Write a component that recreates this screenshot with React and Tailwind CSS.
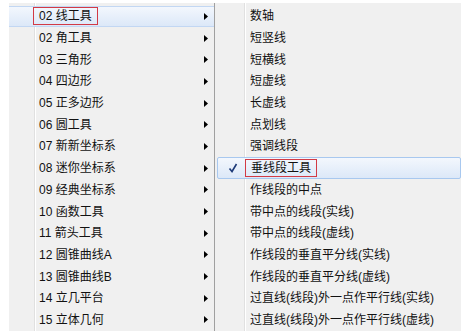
import { Fragment } from 'react'

const leftItems = [
  '02 线工具', '02 角工具', '03 三角形', '04 四边形', '05 正多边形',
  '06 圆工具', '07 新新坐标系', '08 迷你坐标系', '09 经典坐标系', '10 函数工具',
  '11 箭头工具', '12 圆锥曲线A', '13 圆锥曲线B', '14 立几平台', '15 立体几何',
]

const rightItems = [
  '数轴', '短竖线', '短横线', '短虚线', '长虚线', '点划线', '强调线段', '垂线段工具',
  '作线段的中点', '带中点的线段(实线)', '带中点的线段(虚线)', '作线段的垂直平分线(实线)',
  '作线段的垂直平分线(虚线)', '过直线(线段)外一点作平行线(实线)', '过直线(线段)外一点作平行线(虚线)',
]

function Arrow() {
  return (
    <svg width="4" height="7" viewBox="0 0 4 7" className="shrink-0">
      <path d="M0 0 L4 3.5 L0 7 Z" fill="#000" />
    </svg>
  )
}

function Check() {
  return (
    <svg width="10" height="10" viewBox="0 0 10 10">
      <path d="M1.5 5.5 L4 8.5 L8.5 1" fill="none" stroke="#1d3a78" strokeWidth="1.6" />
    </svg>
  )
}

function Label({ text, boxed }) {
  if (!boxed) return <span className="pl-[5px] whitespace-nowrap">{text}</span>
  return (
    <span className="ml-[-1px] h-[18px] px-[5px] flex items-center border border-[#d23a45] whitespace-nowrap">
      {text}
    </span>
  )
}

export default function App() {
  return (
    <div className="w-[461px] h-[331px] overflow-hidden bg-white flex pt-[3px] pl-[9px] text-[12px] text-[#111] font-['Liberation_Sans','Noto_Sans_CJK_SC',sans-serif]">
      {/* parent menu */}
      <div className="relative w-[206px] shrink-0 bg-[#f0f0f0] border-r border-[#a0a0a0] pt-[2.5px]">
        <div className="absolute top-0 bottom-0 left-[25px] w-[2px] border-l border-[#e0e0e0] bg-white" />
        {leftItems.map((t, i) => (
          <div
            key={t}
            className={`relative h-[21.7px] flex items-center pl-[25px] pr-[6px] ${i === 0 ? 'bg-gradient-to-b from-[#f3f7fd] to-[#dce8f8] border-y border-[#c2d7f3]' : ''}`}
          >
            <div className="flex-1 flex items-center">
              <Label text={t} boxed={i === 0} />
            </div>
            <Arrow />
          </div>
        ))}
      </div>

      {/* submenu */}
      <div className="relative flex-1 bg-[#f0f0f0] pt-[2.5px]">
        <div className="absolute top-0 bottom-0 left-[29px] w-[2px] border-l border-[#e0e0e0] bg-white" />
        {rightItems.map((t, i) => (
          <Fragment key={t}>
            {i === 7 ? (
              <div className="relative h-[21.7px] ml-[2px] flex items-center border border-[#a8c8ef] rounded-[2px] bg-gradient-to-b from-[#f3f7fd] to-[#dce8f8]">
                <div className="w-[28px] flex justify-center pl-[2px]">
                  <Check />
                </div>
                <Label text={t} boxed />
              </div>
            ) : (
              <div className="relative h-[21.7px] flex items-center pl-[30px]">
                <Label text={t} />
              </div>
            )}
          </Fragment>
        ))}
      </div>
    </div>
  )
}
